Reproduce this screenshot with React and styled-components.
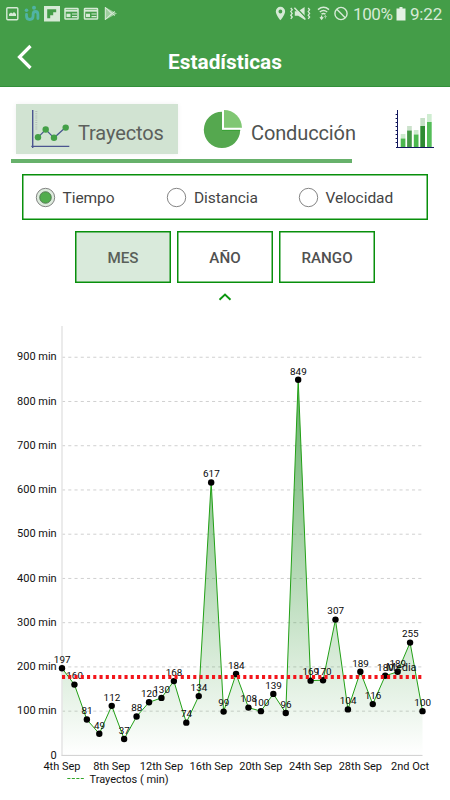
import React, { useState } from "react";
import styled, { createGlobalStyle, css } from "styled-components";

const GlobalStyle = createGlobalStyle`
  * {
    box-sizing: border-box;
  }
  body {
    margin: 0;
    background-color: #ffffff;
    font-family: Roboto, "Liberation Sans", sans-serif;
  }
  button {
    font-family: inherit;
    margin: 0;
  }
`;

const Screen = styled.div`
  display: flex;
  flex-direction: column;
  width: 450px;
  height: 800px;
  overflow: hidden;
  background-color: #ffffff;
`;

const Header = styled.header`
  flex-shrink: 0;
  height: 87px;
  background-color: #449d48;
  border-bottom: 1px solid #32903a;
`;

const StatusBar = styled.div`
  display: flex;
  justify-content: space-between;
  height: 28px;
  color: #d6ead6;
  svg {
    display: block;
    flex-shrink: 0;
  }
`;

const StatusInfo = styled.div`
  display: flex;
  padding-right: 7px;
  font-size: 17px;
  line-height: 28px;
  .battery_text {
    width: 40px;
    margin-left: 4px;
    letter-spacing: -0.4px;
    white-space: nowrap;
  }
  .clock_text {
    width: 33px;
    white-space: nowrap;
    letter-spacing: -0.2px;
  }
`;

const TitleBar = styled.div`
  display: grid;
  grid-template-columns: 60px 1fr 60px;
  height: 58px;
  color: #ffffff;
  h1 {
    margin: 0;
    padding-top: 5px;
    font-size: 20.8px;
    font-weight: 700;
    line-height: 58px;
    text-align: center;
  }
`;

const BackButton = styled.button`
  display: flex;
  padding: 16px 0 0 16px;
  border: none;
  background: none;
`;

const Tabs = styled.nav`
  display: flex;
  flex-shrink: 0;
  height: 55px;
  margin-top: 17px;
  padding-left: 16px;
`;

const Tab = styled.button`
  display: flex;
  flex-shrink: 0;
  width: ${(props) => props.$width}px;
  height: 50px;
  padding: 0 0 0 ${(props) => props.$indent}px;
  border: none;
  background-color: transparent;
  color: #4f5350;
  font-size: 20px;
  line-height: 58px;
  white-space: nowrap;
  ${(props) =>
    props.$active &&
    css`
      background-color: #d1e3d2;
      box-shadow: 0 0 5px rgba(0, 0, 0, 0.06);
      color: #5c605c;
    `}
  svg {
    display: block;
    flex-shrink: 0;
  }
  .tab_text {
    margin-left: ${(props) => props.$gap}px;
    letter-spacing: -0.12px;
  }
`;

const TabIndicator = styled.div`
  flex-shrink: 0;
  width: 341px;
  height: 4px;
  margin-left: 11px;
  background-color: #67b16b;
`;

const RadioGroup = styled.div`
  display: grid;
  grid-template-columns: 131.5px 131.5px 1fr;
  flex-shrink: 0;
  align-items: center;
  height: 46px;
  margin: 11px 22px 0;
  padding: 0 0 0 11.5px;
  border: 1px solid #088f0c;
  box-shadow: inset 0 0 0 0.5px #088f0c;
`;

const RadioOption = styled.label`
  display: flex;
  align-items: center;
  color: #444444;
  font-size: 15.5px;
  white-space: nowrap;
  svg {
    margin-right: 7px;
  }
  span {
    padding-top: 2px;
    letter-spacing: -0.06px;
  }
`;

const PeriodRow = styled.div`
  display: flex;
  flex-shrink: 0;
  justify-content: center;
  gap: 6px;
  margin-top: 11px;
`;

const PeriodButton = styled.button`
  width: 96px;
  height: 52px;
  padding: 2px 0 0;
  border: 1px solid #088f0c;
  box-shadow: inset 0 0 0 0.5px #088f0c;
  background-color: ${(props) => (props.$active ? "#d9eadb" : "#ffffff")};
  color: ${(props) => (props.$active ? "#596059" : "#505050")};
  font-size: 15.2px;
  font-weight: 500;
`;

const Collapse = styled.div`
  display: flex;
  flex-shrink: 0;
  justify-content: center;
  height: 27px;
  padding-top: 9px;
`;

const Chart = styled.svg`
  display: block;
  flex-shrink: 0;
  .axis_text {
    font-size: 11px;
    fill: #111111;
  }
  .value_text {
    font-size: 9.9px;
    fill: #080808;
    text-anchor: middle;
  }
`;

const VALUES = [
  197, 160, 81, 49, 112, 37, 88, 120, 130, 168, 74, 134, 617, 99, 184, 108,
  100, 139, 96, 849, 169, 170, 307, 104, 189, 116, 180, 189, 255, 100,
];
const DAYS = [
  "4th Sep",
  "8th Sep",
  "12th Sep",
  "16th Sep",
  "20th Sep",
  "24th Sep",
  "28th Sep",
  "2nd Oct",
];
const TICKS = [0, 100, 200, 300, 400, 500, 600, 700, 800, 900];
const LEFT = 62;
const RIGHT = 422.5;
const BASE = 445.4;

const xOf = (i) => LEFT + (i * (RIGHT - LEFT)) / (VALUES.length - 1);
const yOf = (v) => BASE - v * 0.4424;

function NotificationIcons() {
  return (
    <svg width="125" height="28" viewBox="0 0 125 28" fill="none">
      <rect x="6.8" y="7.7" width="11" height="12" rx="1" stroke="#d6ead6" strokeWidth="1.4" />
      <path d="M9 16v-2l2-1.5 1.5 1 1.5-1.5 2 2v2z" fill="#d6ead6" />
      <g stroke="#50b3a4" strokeWidth="2.8" strokeLinecap="round">
        <path d="M26.5 14.5v1.5q0 3.5 3.3 3.5t3.3-3.5v-1.5q0-3 2.4-3t2.4 3v4" />
      </g>
      <circle cx="26.5" cy="10.3" r="1.8" fill="#50b3a4" />
      <circle cx="34" cy="7.8" r="2" fill="#50b3a4" />
      <rect x="44" y="6" width="16" height="15.5" fill="#d6ead6" />
      <path d="M47.2 9.2h9v3h-3v3h-3v3h-3z" fill="#449d48" />
      {[64, 83.5].map((x) => (
        <g key={x} transform={`translate(${x} 0)`}>
          <rect x="1" y="8.5" width="13" height="10.5" rx="0.6" stroke="#d6ead6" strokeWidth="1.5" />
          <path d="M1 10.7h13" stroke="#d6ead6" strokeWidth="2" />
          <path d="M2.5 15.4h4" stroke="#d6ead6" strokeWidth="3.4" />
          <path d="M8 14h5M8 16.6h5" stroke="#d6ead6" strokeWidth="1.2" />
        </g>
      ))}
      <path d="M105 7v13l12-6.5z" fill="#9fce9f" />
      <path d="M105.3 7.4v12.2l6-6zM105.3 7.4l9.5 8.2M105.3 19.6l9.5-8.2" stroke="#d6ead6" strokeWidth="1" />
    </svg>
  );
}

function SignalIcons() {
  return (
    <svg width="75" height="28" viewBox="274 0 75 28" fill="none">
      <path
        d="M280.4 6.8a4.6 4.6 0 0 0-4.6 4.7c0 3.3 4.6 8.8 4.6 8.8s4.7-5.5 4.7-8.8a4.6 4.6 0 0 0-4.7-4.7zm0 2.8a1.9 1.9 0 1 1 0 3.8 1.9 1.9 0 0 1 0-3.8z"
        fill="#d6ead6"
      />
      <path d="M294.8 11.2h3.4l6.4-4.2v12.8l-6.4-4h-3.4z" fill="#d6ead6" />
      <path d="M295.6 7l10.5 11" stroke="#449d48" strokeWidth="1.3" />
      <path d="M294.4 7.8l11 11.7" stroke="#d6ead6" strokeWidth="1.4" />
      <path
        d="M290.8 8l1.4 1.8-1.4 1.8 1.4 1.8-1.4 1.8 1.4 1.8-1.4 1.8M308.2 8l1.4 1.8-1.4 1.8 1.4 1.8-1.4 1.8 1.4 1.8-1.4 1.8"
        stroke="#d6ead6"
        strokeWidth="1.3"
      />
      <path d="M318 9.6q5.5-4.5 11 0M319.8 12q3.7-3 7.4 0M321.5 14.2q2-1.6 4 0" stroke="#d6ead6" strokeWidth="1.5" />
      <path d="M321.6 15.5v3.5M320 17.2l1.6 2 1.6-2" stroke="#d6ead6" strokeWidth="1.2" />
      <path d="M325.4 18.5v-3M324.2 16.8l1.2-1.4 1.2 1.4" stroke="#a9d2aa" strokeWidth="1" />
      <circle cx="341" cy="13.5" r="6.1" stroke="#d6ead6" strokeWidth="1.4" />
      <path d="M336.8 9.2l8.4 8.6" stroke="#d6ead6" strokeWidth="1.4" />
    </svg>
  );
}

function LineIcon() {
  return (
    <svg width="40" height="50" viewBox="31 104 40 50" fill="none">
      <path d="M36.3 111v19" stroke="#b5c0bb" strokeWidth="2" strokeDasharray="1 1.2" />
      <path d="M32.7 110v38M31.3 146.4h38" stroke="#4b5590" strokeWidth="1.4" />
      <path d="M38 137.3l7.7-7.8 8.3 8.3 11.7-10.5" stroke="#48558e" strokeWidth="1.2" />
      {[[38, 137.3], [45.7, 129.5], [54, 137.8], [65.7, 127.6]].map(([x, y]) => (
        <circle key={x} cx={x} cy={y} r="3.2" fill="#43a047" />
      ))}
    </svg>
  );
}

function PieIcon() {
  return (
    <svg width="40" height="50" viewBox="203 104 40 50">
      <path d="M222 111.7a18.2 18.2 0 1 0 18.2 18.4H222z" fill="#55a84f" />
      <path d="M224 109.9a18 18 0 0 1 18 17.9h-18z" fill="#80c773" />
      <path d="M222 130.3h18.2" stroke="#2ca02a" strokeWidth="0.8" />
    </svg>
  );
}

function BarsIcon() {
  const bars = [
    [400.7, 134, 138.5, "#4cb84f"],
    [407.1, 126, 130.5, "#449746"],
    [413.8, 130, 134.5, "#4cb84f"],
    [420.3, 118, 126, "#2f8b33"],
    [427, 114, 122, "#53bd58"],
  ];
  return (
    <svg width="40" height="50" viewBox="395 104 40 50">
      {bars.map(([x, top, mid, color]) => (
        <g key={x}>
          <rect x={x} y={top} width="4.7" height={mid - top} fill={color} opacity="0.28" />
          <rect x={x} y={mid} width="4.7" height={147.3 - mid} fill={color} />
        </g>
      ))}
      <path d="M397.5 110v37.5M396 147.5h38" stroke="#12175c" strokeWidth="1" fill="none" />
      <path d="M396.3 114v32" stroke="#12175c" strokeWidth="1.4" strokeDasharray="1 3" />
    </svg>
  );
}

function Radio({ label, checked, onSelect }) {
  return (
    <RadioOption onClick={onSelect}>
      <svg width="21" height="21" viewBox="0 0 21 21">
        <circle cx="10.5" cy="10.5" r="9.2" fill={checked ? "#ddebdd" : "#ffffff"} stroke="#777777" strokeWidth="0.9" />
        {checked && <circle cx="10.5" cy="10.5" r="5.8" fill="#51ad4d" stroke="#4b6c4b" strokeWidth="0.8" />}
      </svg>
      <span>{label}</span>
    </RadioOption>
  );
}

function TripsChart() {
  const line = VALUES.map((v, i) => `${xOf(i)},${yOf(v)}`).join(" ");
  return (
    <Chart width="450" height="490" viewBox="0 0 450 490">
      <defs>
        <linearGradient id="area" gradientUnits="userSpaceOnUse" x1="0" y1={yOf(849)} x2="0" y2={BASE}>
          <stop offset="0" stopColor="#44a047" stopOpacity="0.82" />
          <stop offset="1" stopColor="#44a047" stopOpacity="0" />
        </linearGradient>
      </defs>
      {TICKS.map((t) => (
        <g key={t}>
          {t > 0 && (
            <path d={`M${LEFT} ${yOf(t)}H${RIGHT}`} stroke="#d0d0d0" strokeWidth="1" strokeDasharray="3.1 3.15" />
          )}
          <text className="axis_text" x="56.7" y={yOf(t) + 3.2} textAnchor="end">
            {t === 0 ? "0" : `${t} min`}
          </text>
        </g>
      ))}
      <polygon points={`${LEFT},${BASE} ${line} ${RIGHT},${BASE}`} fill="url(#area)" />
      <path d={`M62 16V${BASE}`} stroke="#e5e5e5" strokeWidth="1.5" />
      <path d={`M61.5 ${BASE}H${RIGHT}`} stroke="#cfcfcf" strokeWidth="1" />
      <polyline points={line} fill="none" stroke="#22a016" strokeWidth="1" />
      {VALUES.map((v, i) => (
        <circle key={i} cx={xOf(i)} cy={yOf(v)} r="3.2" fill="#000000" />
      ))}
      {VALUES.map((v, i) => (
        <text key={i} className="value_text" x={xOf(i) + 0.2} y={yOf(v) - 5.2}>
          {v}
        </text>
      ))}
      <path d={`M${LEFT} 367H${RIGHT}`} stroke="#f3151b" strokeWidth="4" strokeDasharray="3.1 3.15" />
      <text className="axis_text" x="386.3" y="361.3">
        Media
      </text>
      {DAYS.map((day, i) => (
        <text key={day} className="axis_text" x={xOf(i * 4)} y="459.7" textAnchor="middle">
          {day}
        </text>
      ))}
      <path d="M67.3 468.5h16.5" stroke="#31a528" strokeWidth="1" strokeDasharray="3.1 1.4" />
      <text className="axis_text" x="89.5" y="472.6">
        Trayectos ( min)
      </text>
    </Chart>
  );
}

function App() {
  const [tab, setTab] = useState("trayectos");
  const [metric, setMetric] = useState("Tiempo");
  const [period, setPeriod] = useState("MES");

  return (
    <Screen>
      <GlobalStyle />
      <Header>
        <StatusBar>
          <NotificationIcons />
          <StatusInfo>
            <SignalIcons />
            <span className="battery_text">100%</span>
            <svg width="17" height="28" viewBox="0 0 17 28">
              <path d="M6.5 7h3v1.5h3V20.5h-9V8.5h3z" fill="#e4f2e4" />
            </svg>
            <span className="clock_text">9:22</span>
          </StatusInfo>
        </StatusBar>
        <TitleBar>
          <BackButton aria-label="Volver">
            <svg width="18" height="26" viewBox="0 0 18 26">
              <path d="M14.5 2L3.5 13l11 11" fill="none" stroke="#ffffff" strokeWidth="3.2" />
            </svg>
          </BackButton>
          <h1>Estadísticas</h1>
        </TitleBar>
      </Header>
      <Tabs>
        <Tab $width={162} $indent={15} $gap={7} $active={tab === "trayectos"} onClick={() => setTab("trayectos")}>
          <LineIcon />
          <span className="tab_text">Trayectos</span>
        </Tab>
        <Tab $width={217} $indent={25} $gap={8} $active={tab === "conduccion"} onClick={() => setTab("conduccion")}>
          <PieIcon />
          <span className="tab_text">Conducción</span>
        </Tab>
        <Tab $width={55} $indent={0} $active={tab === "barras"} onClick={() => setTab("barras")}>
          <BarsIcon />
        </Tab>
      </Tabs>
      <TabIndicator />
      <RadioGroup>
        {["Tiempo", "Distancia", "Velocidad"].map((label) => (
          <Radio key={label} label={label} checked={metric === label} onSelect={() => setMetric(label)} />
        ))}
      </RadioGroup>
      <PeriodRow>
        {["MES", "AÑO", "RANGO"].map((label) => (
          <PeriodButton key={label} $active={period === label} onClick={() => setPeriod(label)}>
            {label}
          </PeriodButton>
        ))}
      </PeriodRow>
      <Collapse>
        <svg width="14" height="10" viewBox="0 0 14 10">
          <path d="M1.5 7.7L7 2.6l5.5 5.1" fill="none" stroke="#0b960f" strokeWidth="1.9" />
        </svg>
      </Collapse>
      <TripsChart />
    </Screen>
  );
}

export default App;
